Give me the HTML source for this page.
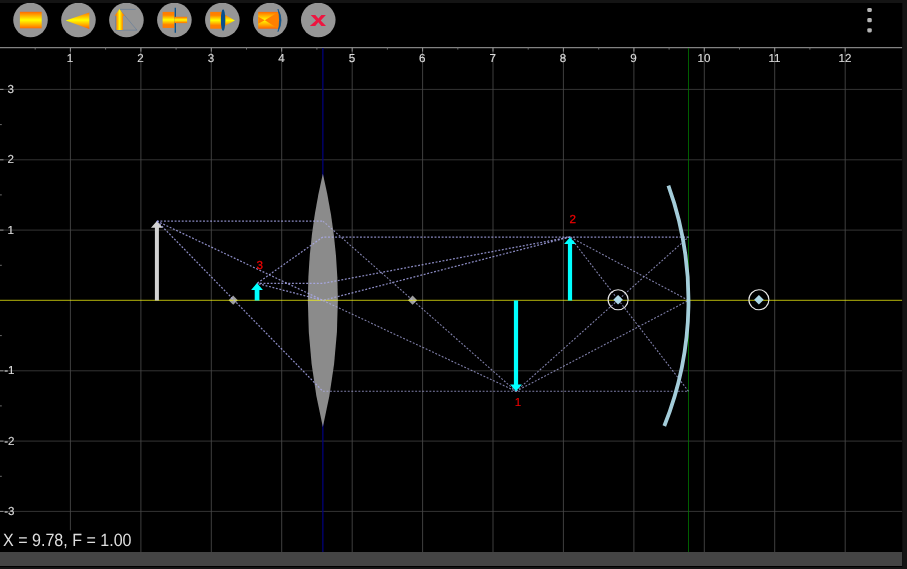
<!DOCTYPE html>
<html lang="en"><head><meta charset="utf-8"><title>Ray Optics</title>
<style>
html,body{margin:0;padding:0;background:#141414;overflow:hidden}
body{width:907px;height:569px;position:relative;font-family:"Liberation Sans",sans-serif}
svg{position:absolute;left:0;top:0;display:block;will-change:transform}
text{font-family:"Liberation Sans",sans-serif;text-rendering:geometricPrecision}
</style></head><body>
<svg width="907" height="569" viewBox="0 0 907 569">
<defs>
<linearGradient id="gv" x1="0" y1="0" x2="0" y2="1"><stop offset="0" stop-color="#ff6a00"/><stop offset="0.5" stop-color="#ffff00"/><stop offset="1" stop-color="#ff6a00"/></linearGradient>
<linearGradient id="gh" x1="0" y1="0" x2="1" y2="0"><stop offset="0" stop-color="#ff7800"/><stop offset="0.17" stop-color="#ff8600"/><stop offset="0.5" stop-color="#ffff00"/><stop offset="0.83" stop-color="#ff8600"/><stop offset="1" stop-color="#ff7800"/></linearGradient>
<linearGradient id="gbig" gradientUnits="userSpaceOnUse" x1="0" y1="11.8" x2="0" y2="28.4"><stop offset="0" stop-color="#ff6a00"/><stop offset="0.5" stop-color="#ffff00"/><stop offset="1" stop-color="#ff6a00"/></linearGradient>
<linearGradient id="gb4" x1="0" y1="0" x2="0" y2="1"><stop offset="0" stop-color="#ff7c00"/><stop offset="0.2" stop-color="#ff8200"/><stop offset="0.5" stop-color="#ffff00"/><stop offset="0.8" stop-color="#ff8200"/><stop offset="1" stop-color="#ff7c00"/></linearGradient>
<clipPath id="clip"><rect x="0" y="3" width="902.3" height="564"/></clipPath>
</defs>
<rect x="0" y="0" width="907" height="569" fill="#141414"/>
<rect x="0" y="3" width="902.3" height="564" fill="#000"/>
<g clip-path="url(#clip)">

<g id="grid" fill="none" stroke-width="0.72">
<line x1="70.4" y1="48" x2="70.4" y2="552" stroke="#585858"/>
<line x1="140.9" y1="48" x2="140.9" y2="552" stroke="#585858"/>
<line x1="211.3" y1="48" x2="211.3" y2="552" stroke="#585858"/>
<line x1="281.7" y1="48" x2="281.7" y2="552" stroke="#585858"/>
<line x1="352.2" y1="48" x2="352.2" y2="552" stroke="#585858"/>
<line x1="422.6" y1="48" x2="422.6" y2="552" stroke="#585858"/>
<line x1="493.0" y1="48" x2="493.0" y2="552" stroke="#585858"/>
<line x1="563.4" y1="48" x2="563.4" y2="552" stroke="#585858"/>
<line x1="633.9" y1="48" x2="633.9" y2="552" stroke="#585858"/>
<line x1="704.3" y1="48" x2="704.3" y2="552" stroke="#585858"/>
<line x1="774.7" y1="48" x2="774.7" y2="552" stroke="#585858"/>
<line x1="845.2" y1="48" x2="845.2" y2="552" stroke="#585858"/>
<line x1="0" y1="511.4" x2="902.3" y2="511.4" stroke="#484848"/>
<line x1="0" y1="441.1" x2="902.3" y2="441.1" stroke="#484848"/>
<line x1="0" y1="370.8" x2="902.3" y2="370.8" stroke="#484848"/>
<line x1="0" y1="230.1" x2="902.3" y2="230.1" stroke="#484848"/>
<line x1="0" y1="159.8" x2="902.3" y2="159.8" stroke="#484848"/>
<line x1="0" y1="89.4" x2="902.3" y2="89.4" stroke="#484848"/>
</g>
<g id="ruler" stroke="#8a8a8a" stroke-width="0.9" fill="none">
<line x1="0" y1="47.6" x2="902.3" y2="47.6" stroke="#828282" stroke-width="1.3"/>
<line x1="35.2" y1="47.6" x2="35.2" y2="49.6" stroke="#777"/>
<line x1="70.4" y1="47.6" x2="70.4" y2="51.6" stroke="#9a9a9a"/>
<line x1="105.6" y1="47.6" x2="105.6" y2="49.6" stroke="#777"/>
<line x1="140.9" y1="47.6" x2="140.9" y2="51.6" stroke="#9a9a9a"/>
<line x1="176.1" y1="47.6" x2="176.1" y2="49.6" stroke="#777"/>
<line x1="211.3" y1="47.6" x2="211.3" y2="51.6" stroke="#9a9a9a"/>
<line x1="246.5" y1="47.6" x2="246.5" y2="49.6" stroke="#777"/>
<line x1="281.7" y1="47.6" x2="281.7" y2="51.6" stroke="#9a9a9a"/>
<line x1="316.9" y1="47.6" x2="316.9" y2="49.6" stroke="#777"/>
<line x1="352.2" y1="47.6" x2="352.2" y2="51.6" stroke="#9a9a9a"/>
<line x1="387.4" y1="47.6" x2="387.4" y2="49.6" stroke="#777"/>
<line x1="422.6" y1="47.6" x2="422.6" y2="51.6" stroke="#9a9a9a"/>
<line x1="457.8" y1="47.6" x2="457.8" y2="49.6" stroke="#777"/>
<line x1="493.0" y1="47.6" x2="493.0" y2="51.6" stroke="#9a9a9a"/>
<line x1="528.2" y1="47.6" x2="528.2" y2="49.6" stroke="#777"/>
<line x1="563.4" y1="47.6" x2="563.4" y2="51.6" stroke="#9a9a9a"/>
<line x1="598.7" y1="47.6" x2="598.7" y2="49.6" stroke="#777"/>
<line x1="633.9" y1="47.6" x2="633.9" y2="51.6" stroke="#9a9a9a"/>
<line x1="669.1" y1="47.6" x2="669.1" y2="49.6" stroke="#777"/>
<line x1="704.3" y1="47.6" x2="704.3" y2="51.6" stroke="#9a9a9a"/>
<line x1="739.5" y1="47.6" x2="739.5" y2="49.6" stroke="#777"/>
<line x1="774.7" y1="47.6" x2="774.7" y2="51.6" stroke="#9a9a9a"/>
<line x1="809.9" y1="47.6" x2="809.9" y2="49.6" stroke="#777"/>
<line x1="845.2" y1="47.6" x2="845.2" y2="51.6" stroke="#9a9a9a"/>
<line x1="0" y1="511.4" x2="3.5" y2="511.4" stroke="#9a9a9a"/>
<line x1="0" y1="476.3" x2="1.8" y2="476.3" stroke="#777"/>
<line x1="0" y1="441.1" x2="3.5" y2="441.1" stroke="#9a9a9a"/>
<line x1="0" y1="405.9" x2="1.8" y2="405.9" stroke="#777"/>
<line x1="0" y1="370.8" x2="3.5" y2="370.8" stroke="#9a9a9a"/>
<line x1="0" y1="335.6" x2="1.8" y2="335.6" stroke="#777"/>
<line x1="0" y1="265.3" x2="1.8" y2="265.3" stroke="#777"/>
<line x1="0" y1="230.1" x2="3.5" y2="230.1" stroke="#9a9a9a"/>
<line x1="0" y1="194.9" x2="1.8" y2="194.9" stroke="#777"/>
<line x1="0" y1="159.8" x2="3.5" y2="159.8" stroke="#9a9a9a"/>
<line x1="0" y1="124.6" x2="1.8" y2="124.6" stroke="#777"/>
<line x1="0" y1="89.4" x2="3.5" y2="89.4" stroke="#9a9a9a"/>
</g>
<line x1="322.86" y1="48" x2="322.86" y2="552" stroke="#000080" stroke-width="1.22"/>
<line x1="688.5" y1="48" x2="688.5" y2="552" stroke="#008000" stroke-width="0.74"/>
<g id="labels" font-size="11.6" fill="#dcdcdc" stroke="#dcdcdc" stroke-width="0.15">
<text x="70.1" y="62" text-anchor="middle">1</text>
<text x="140.6" y="62" text-anchor="middle">2</text>
<text x="211.0" y="62" text-anchor="middle">3</text>
<text x="281.4" y="62" text-anchor="middle">4</text>
<text x="351.9" y="62" text-anchor="middle">5</text>
<text x="422.3" y="62" text-anchor="middle">6</text>
<text x="492.7" y="62" text-anchor="middle">7</text>
<text x="563.1" y="62" text-anchor="middle">8</text>
<text x="633.6" y="62" text-anchor="middle">9</text>
<text x="704.0" y="62" text-anchor="middle">10</text>
<text x="774.4" y="62" text-anchor="middle">11</text>
<text x="844.9" y="62" text-anchor="middle">12</text>
<text x="4.2" y="514.8">-3</text>
<text x="4.2" y="444.5">-2</text>
<text x="4.2" y="374.2">-1</text>
<text x="7.6" y="233.5">1</text>
<text x="7.6" y="163.2">2</text>
<text x="7.6" y="92.8">3</text>
</g>
<path d="M322.86 173.7A549.7 549.7 0 0 1 322.86 427.1A549.7 549.7 0 0 1 322.86 173.7Z" fill="#8b8b8b"/>
<path d="M228.6 300.14L233.2 295.5L237.8 300.14L233.2 304.7Z" fill="#9c9c9c" fill-opacity="1"/>
<path d="M408.0 300.14L412.6 295.5L417.2 300.14L412.6 304.7Z" fill="#9c9c9c" fill-opacity="1"/>
<line x1="0" y1="300.44" x2="902.3" y2="300.44" stroke="#ffff10" stroke-opacity="0.57" stroke-width="1.2"/>
<path d="M154.9 300.44L154.9 227.8L151.0 227.8L156.9 221.0L162.8 227.8L158.9 227.8L158.9 300.44Z" fill="#d2d2d2"/>
<g id="rays" fill="none" stroke="#acacf2" stroke-width="1.25" stroke-dasharray="1.9 1.65" stroke-opacity="0.8">
<polyline points="156.9,221.1 322.9,221.1"/>
<polyline points="156.9,221.1 322.9,300.4"/>
<polyline points="156.9,221.1 322.9,391.3"/>
<polyline points="688.5,237.0 322.9,237.0 257.0,283.4"/>
<polyline points="570.0,237.0 322.9,300.4 257.0,283.4"/>
<polyline points="570.0,237.0 322.9,283.4 257.0,283.4"/>
</g>
<g id="rays2" fill="none" stroke="#b0b0ea" stroke-width="1.1" stroke-dasharray="1.9 1.65" stroke-opacity="0.72">
<polyline points="322.9,221.1 516.0,391.3"/>
<polyline points="322.9,300.4 516.0,391.3"/>
<polyline points="322.9,391.3 688.5,391.3"/>
<polyline points="688.5,391.3 570.0,237.0"/>
<polyline points="516.0,391.3 688.5,237.0"/>
<polyline points="516.0,391.3 688.5,300.4 570.0,237.0"/>
</g>
<path d="M513.9 300.44L513.9 384.5L510.1 384.5L516.0 391.3L521.9 384.5L518.1 384.5L518.1 300.44Z" fill="#00ffff"/>
<path d="M567.9 300.44L567.9 244.1L564.1 244.1L570.0 237.3L575.9 244.1L572.1 244.1L572.1 300.44Z" fill="#00ffff"/>
<path d="M254.7 300.44L254.7 289.9L251.1 289.9L257.0 283.1L262.9 289.9L259.4 289.9L259.4 300.44Z" fill="#00ffff"/>
<g font-size="11.6" fill="#f00000" stroke="#f00000" stroke-width="0.3">
<text x="514.8" y="406" stroke-width="0.1">1</text>
<text x="569.4" y="223.4">2</text>
<text x="256.6" y="268.5">3</text>
</g>
<path d="M668.4 185.6A338.0 338.0 0 0 1 664.3 426.0" fill="none" stroke="#add8e6" stroke-width="3.8" stroke-opacity="0.95"/>
<path d="M613.3 299.79L618.1 295.0L622.9 299.79L618.1 304.6Z" fill="#add8e6" fill-opacity="1"/>
<circle cx="618.1" cy="299.79" r="10" fill="none" stroke="#e4e4e4" stroke-width="1.15"/>
<path d="M754.1 299.79L758.9 295.0L763.7 299.79L758.9 304.6Z" fill="#add8e6" fill-opacity="1"/>
<circle cx="758.9" cy="299.79" r="10" fill="none" stroke="#e4e4e4" stroke-width="1.15"/>
<rect x="0" y="530.4" width="135" height="22" fill="#000"/>
<text x="3.1" y="545.5" font-size="17.8" fill="#dedede" textLength="128.4" lengthAdjust="spacingAndGlyphs">X = 9.78, F = 1.00</text>
<rect x="0" y="552" width="902.3" height="14" fill="#444444"/>
<g id="toolbar">
<circle cx="30.5" cy="20" r="17.3" fill="#969696"/>
<circle cx="78.46000000000001" cy="20" r="17.3" fill="#969696"/>
<circle cx="126.42" cy="20" r="17.3" fill="#969696"/>
<circle cx="174.38" cy="20" r="17.3" fill="#969696"/>
<circle cx="222.34" cy="20" r="17.3" fill="#969696"/>
<circle cx="270.3" cy="20" r="17.3" fill="#969696"/>
<circle cx="318.26" cy="20" r="17.3" fill="#969696"/>
<rect x="19.9" y="11.8" width="21.8" height="16.5" fill="url(#gbig)"/>
<path d="M65.7 20.6L89.3 12.6L89.3 29Z" fill="url(#gbig)"/>
<path d="M119.5 9.4H135.6M119.6 9.4L137 30.2M115.6 30.2H137M115.6 16V30.2" stroke="#3f6aa0" stroke-width="0.6" stroke-opacity="0.6" fill="none"/>
<path d="M116.4 29.9V15.8H114.7L119.5 8.9L124.6 15.8H122.9V29.9Z" fill="url(#gh)"/>
<rect x="162.6" y="11.9" width="11.8" height="16" fill="url(#gb4)"/>
<line x1="175.3" y1="7.7" x2="175.3" y2="32.7" stroke="#08508c" stroke-width="1.3"/>
<rect x="174.3" y="16.8" width="12.8" height="6.3" fill="url(#gv)"/>
<rect x="210.2" y="11.9" width="11.6" height="16.8" fill="url(#gb4)"/>
<path d="M224.6 14.6L234.9 20.4L224.6 26.1Z" fill="url(#gv)"/>
<ellipse cx="223.1" cy="20.2" rx="2.25" ry="10.9" fill="#08508c"/>
<rect x="258.2" y="11.9" width="20.2" height="16.8" fill="url(#gbig)"/>
<path d="M258.2 16.8L264.8 20.2L258.2 23.8Z" fill="#ff8000"/>
<path d="M264.8 20.2L278.2 11.9Q280.9 20.3 278.2 28.7Z" fill="#ff8000"/>
<path d="M278 9.2Q284 20.3 278 31.6Q281.1 20.3 278 9.2Z" fill="#08508c" stroke="#08508c" stroke-width="0.7"/>
<path d="M310.7 14.9H315.3L318.4 18.6L321.4 14.9H325.9L320.7 20.4L326 26H321.4L318.3 22.2L315.2 26H309.8L316 20.4Z" fill="#ee1540"/>
</g>
<rect x="867.3" y="7.9" width="4.5" height="4.2" rx="1.4" fill="#b4b4b4"/>
<rect x="867.3" y="18.1" width="4.5" height="4.2" rx="1.4" fill="#b4b4b4"/>
<rect x="867.3" y="28.2" width="4.5" height="4.2" rx="1.4" fill="#b4b4b4"/>
</g></svg></body></html>
